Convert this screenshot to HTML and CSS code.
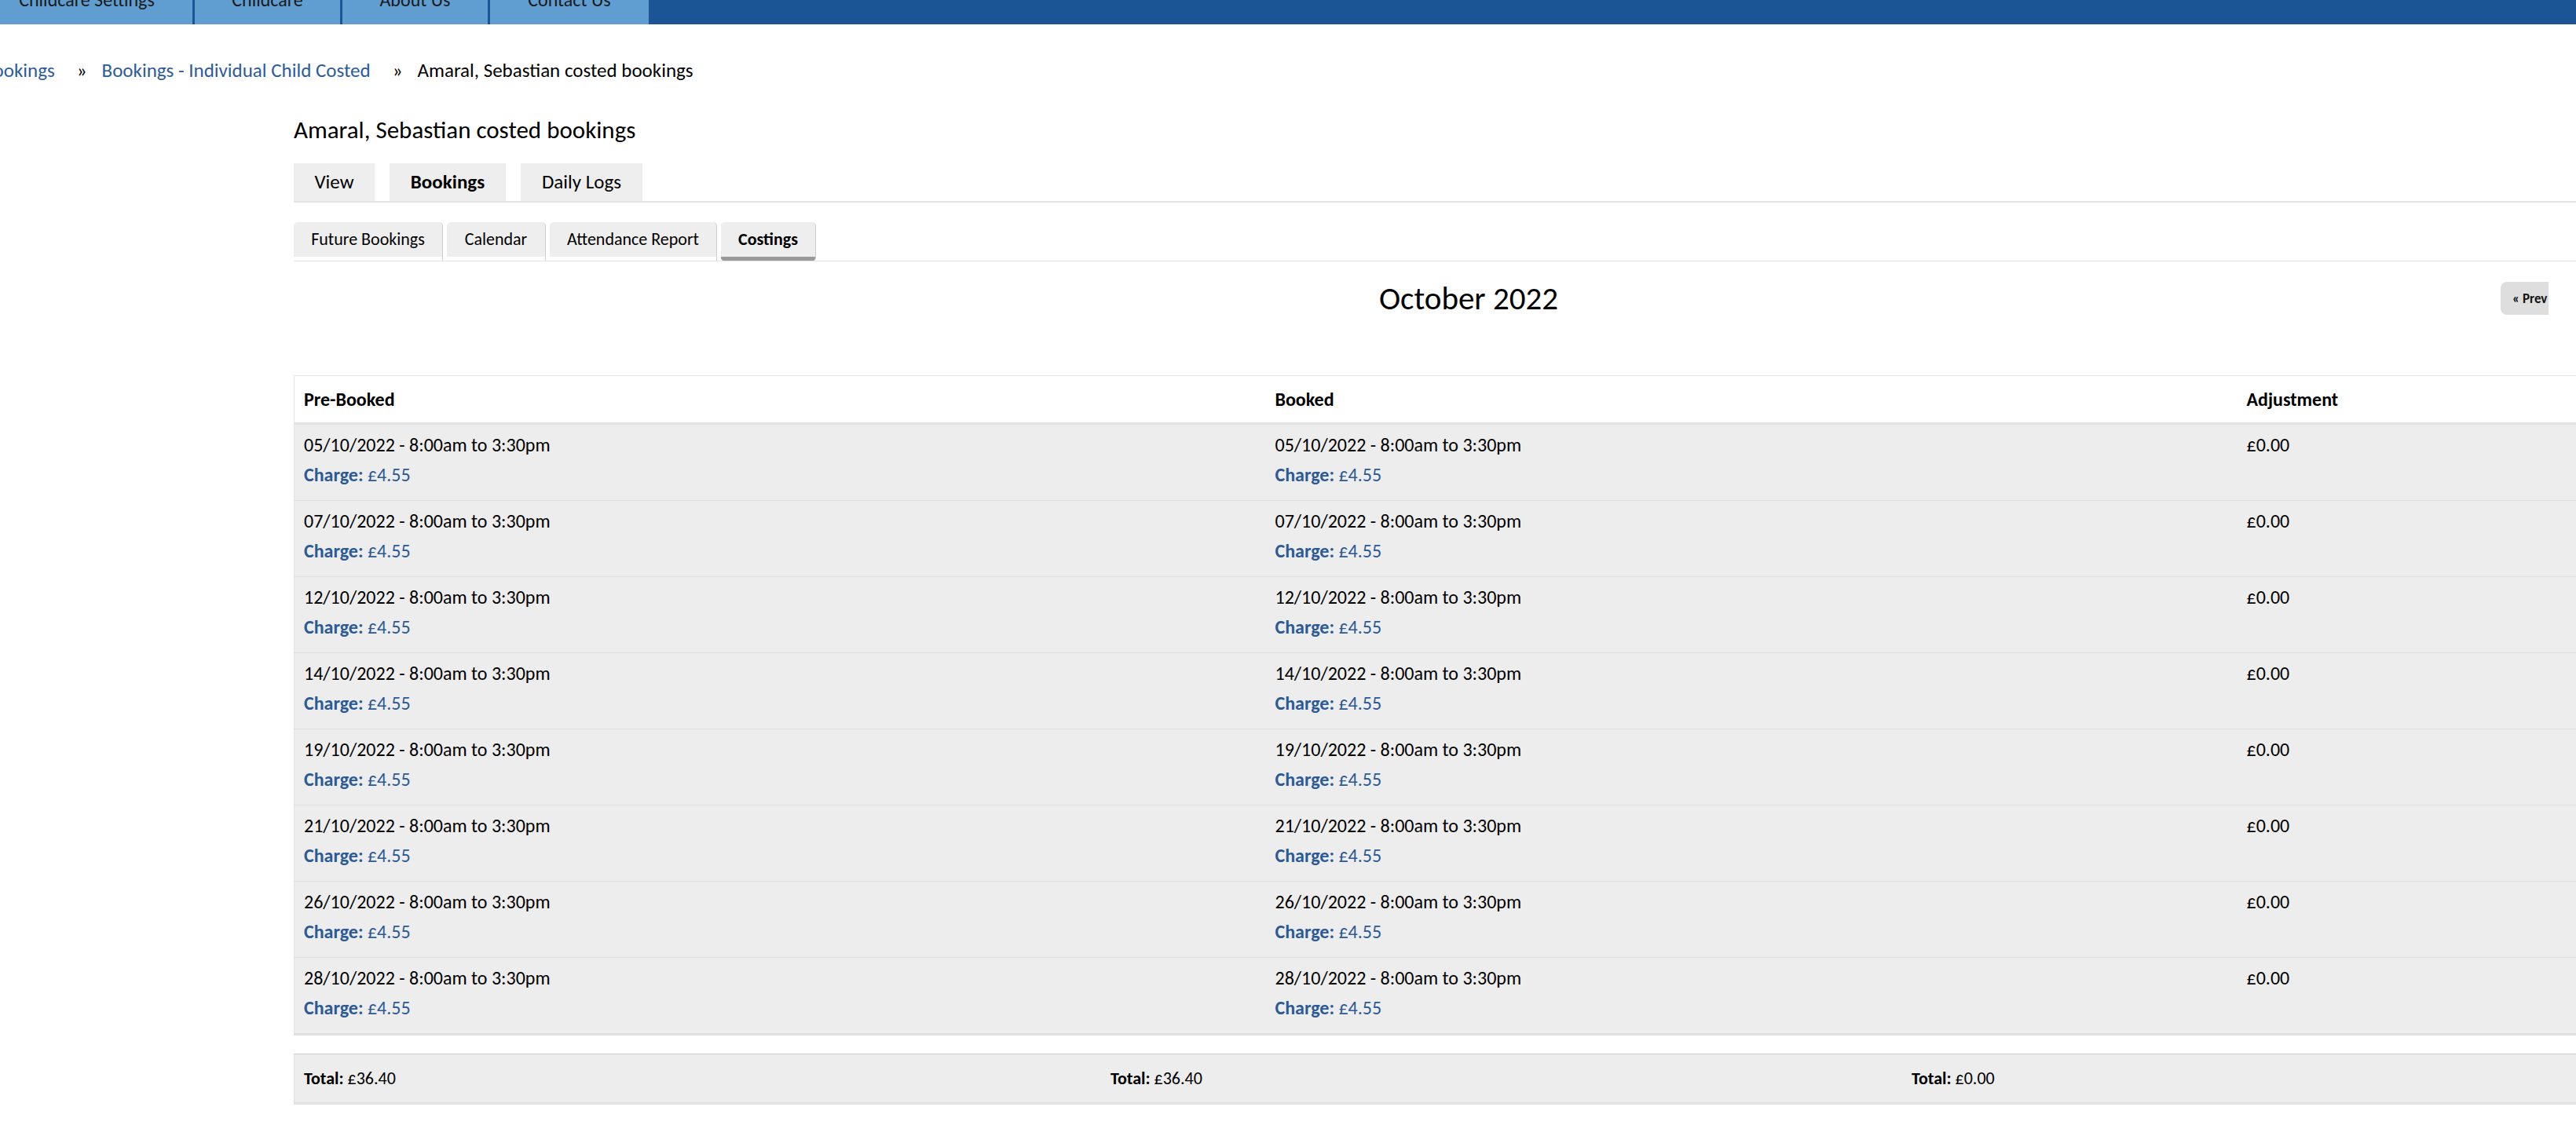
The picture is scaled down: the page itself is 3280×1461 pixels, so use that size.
FILE: index.html
```html
<!DOCTYPE html>
<html lang="en">
<head>
<meta charset="utf-8">
<title>Amaral, Sebastian costed bookings</title>
<link rel="stylesheet" href="styles.css">
</head>
<body>
<nav class="topnav">
  <a class="nav-item nav-first" href="#"><span>Childcare Settings</span></a>
  <a class="nav-item nav-2" href="#"><span>Childcare</span></a>
  <a class="nav-item nav-3" href="#"><span>About Us</span></a>
  <a class="nav-item nav-4" href="#"><span>Contact Us</span></a>
</nav>

<div class="breadcrumb">
  <a href="#">Bookings</a><span class="sep">»</span><a href="#">Bookings - Individual Child Costed</a><span class="sep">»</span><span class="current">Amaral, Sebastian costed bookings</span>
</div>

<main class="content">
  <h1 class="page-title">Amaral, Sebastian costed bookings</h1>

  <ul class="tabs">
    <li class="tab tab-view">View</li>
    <li class="tab tab-active">Bookings</li>
    <li class="tab tab-logs">Daily Logs</li>
  </ul>

  <ul class="subtabs">
    <li class="subtab st-future">Future Bookings</li>
    <li class="subtab st-cal">Calendar</li>
    <li class="subtab st-att">Attendance Report</li>
    <li class="subtab st-cost subtab-active">Costings</li>
  </ul>

  <div class="cal-head">
    <h2 class="cal-title">October 2022</h2>
    <button class="cal-btn">« Prev</button>
  </div>

  <table class="costs">
    <colgroup><col class="c"><col class="c"><col class="c"></colgroup>
    <thead>
      <tr><th>Pre-Booked</th><th>Booked</th><th>Adjustment</th></tr>
    </thead>
    <tbody>
      <tr><td><div class="l">05/10/2022 - 8:00am to 3:30pm</div><div class="l charge"><b>Charge:</b> £4.55</div></td><td><div class="l">05/10/2022 - 8:00am to 3:30pm</div><div class="l charge"><b>Charge:</b> £4.55</div></td><td><div class="l">£0.00</div></td></tr>
      <tr><td><div class="l">07/10/2022 - 8:00am to 3:30pm</div><div class="l charge"><b>Charge:</b> £4.55</div></td><td><div class="l">07/10/2022 - 8:00am to 3:30pm</div><div class="l charge"><b>Charge:</b> £4.55</div></td><td><div class="l">£0.00</div></td></tr>
      <tr><td><div class="l">12/10/2022 - 8:00am to 3:30pm</div><div class="l charge"><b>Charge:</b> £4.55</div></td><td><div class="l">12/10/2022 - 8:00am to 3:30pm</div><div class="l charge"><b>Charge:</b> £4.55</div></td><td><div class="l">£0.00</div></td></tr>
      <tr><td><div class="l">14/10/2022 - 8:00am to 3:30pm</div><div class="l charge"><b>Charge:</b> £4.55</div></td><td><div class="l">14/10/2022 - 8:00am to 3:30pm</div><div class="l charge"><b>Charge:</b> £4.55</div></td><td><div class="l">£0.00</div></td></tr>
      <tr><td><div class="l">19/10/2022 - 8:00am to 3:30pm</div><div class="l charge"><b>Charge:</b> £4.55</div></td><td><div class="l">19/10/2022 - 8:00am to 3:30pm</div><div class="l charge"><b>Charge:</b> £4.55</div></td><td><div class="l">£0.00</div></td></tr>
      <tr><td><div class="l">21/10/2022 - 8:00am to 3:30pm</div><div class="l charge"><b>Charge:</b> £4.55</div></td><td><div class="l">21/10/2022 - 8:00am to 3:30pm</div><div class="l charge"><b>Charge:</b> £4.55</div></td><td><div class="l">£0.00</div></td></tr>
      <tr><td><div class="l">26/10/2022 - 8:00am to 3:30pm</div><div class="l charge"><b>Charge:</b> £4.55</div></td><td><div class="l">26/10/2022 - 8:00am to 3:30pm</div><div class="l charge"><b>Charge:</b> £4.55</div></td><td><div class="l">£0.00</div></td></tr>
      <tr class="last"><td><div class="l">28/10/2022 - 8:00am to 3:30pm</div><div class="l charge"><b>Charge:</b> £4.55</div></td><td><div class="l">28/10/2022 - 8:00am to 3:30pm</div><div class="l charge"><b>Charge:</b> £4.55</div></td><td><div class="l">£0.00</div></td></tr>
    </tbody>
  </table>

  <div class="totals">
    <div class="tot"><b>Total:</b> £36.40</div>
    <div class="tot"><b>Total:</b> £36.40</div>
    <div class="tot"><b>Total:</b> £0.00</div>
  </div>
</main>
</body>
</html>
```
FILE: styles.css
```css
html, body {
  margin: 0;
  padding: 0;
  overflow: hidden;
  background: #ffffff;
}
body {
  font-family: "Carlito", "Calibri", "Lato", "Liberation Sans", sans-serif;
  color: #000;
  width: 3280px;
}
a { text-decoration: none; }

/* top navigation */
.topnav {
  display: flex;
  height: 31px;
  overflow: hidden;
  background: #1b5596;
}
.nav-item {
  flex: none;
  display: flex;
  justify-content: center;
  align-items: flex-end;
  padding-bottom: 19px;
  box-sizing: border-box;
  height: 31px;
  background: #609ed1;
  color: #1a1a1a;
  font-size: 24px;
  line-height: 24px;
  white-space: nowrap;
}
.nav-first { margin-left: -24px; width: 269px; }
.nav-2 { width: 185px; margin-left: 3px; }
.nav-3 { width: 185px; margin-left: 3px; }
.nav-4 { width: 202px; margin-left: 3px; }

/* breadcrumb */
.breadcrumb {
  margin: 44px 0 0 -22px;
  font-size: 25px;
  line-height: 30px;
  white-space: nowrap;
}
.breadcrumb a { color: #2c5b99; }
.breadcrumb .sep { margin: 0 19px 0 28px; color: #000; }
.breadcrumb .current { color: #000; }

/* main content */
.content {
  margin-left: 374px;
}
.page-title {
  margin: 42px 0 0;
  font-size: 31px;
  font-weight: normal;
  line-height: 36px;
}

.tabs {
  list-style: none;
  margin: 25px 0 0;
  padding: 0;
  display: flex;
  gap: 19px;
  border-bottom: 2px solid #e3e3e3;
}
.tab {
  height: 48px;
  line-height: 48px;
  padding: 0 26px;
  background: #eeeeee;
  font-size: 25px;
  text-align: center;
  white-space: nowrap;
}
.tab-view { width: 51px; }
.tab-active { font-weight: bold; width: 96px; }
.tab-logs { width: 103px; }

.subtabs {
  list-style: none;
  margin: 25px 0 0;
  padding: 0;
  display: flex;
  gap: 5px;
  border-bottom: 1px solid #e3e3e3;
}
.subtab {
  box-sizing: border-box;
  height: 49px;
  line-height: 44px;
  padding: 0;
  text-align: center;
  white-space: nowrap;
  font-size: 22px;
  background: linear-gradient(#eeeeee, #eeeeee) top / 100% 44px no-repeat;
  border-radius: 5px 5px 0 0;
  border-right: 1px solid #cfcfcf;
}
.st-future { width: 190px; }
.st-cal { width: 126px; }
.st-att { width: 213px; }
.st-cost { width: 121px; }
.subtab-active {
  font-weight: bold;
  background:
    linear-gradient(#eeeeee, #eeeeee) top / 100% 44px no-repeat,
    linear-gradient(#9a9a9a, #9a9a9a) bottom / 100% 5px no-repeat;
  border-radius: 5px 5px 4px 4px;
}

/* calendar header */
.cal-head {
  display: flex;
  align-items: center;
  width: 2871px;
  overflow: hidden;
  padding-top: 26px;
  margin-bottom: 77px;
}
.cal-title {
  flex: none;
  box-sizing: border-box;
  width: 2810px;
  padding-left: 182px;
  margin: 0;
  text-align: center;
  font-size: 41px;
  font-weight: normal;
  line-height: 42px;
}
.cal-btn {
  flex: none;
  height: 42px;
  width: 110px;
  padding: 0 0 0 15px;
  text-align: left;
  border: none;
  border-radius: 8px;
  background: #dedede;
  font-family: inherit;
  font-weight: bold;
  font-size: 17px;
  color: #111;
}

/* costs table */
.costs {
  border-collapse: collapse;
  table-layout: fixed;
  width: 3711px;
  border-left: 1px solid #e3e3e3;
  font-size: 24px;
}
.costs col.c { width: 1237px; }
.costs th {
  height: 61px;
  padding: 0 12px;
  text-align: left;
  font-weight: bold;
  background: #fff;
  border-top: 1px solid #e3e3e3;
  border-bottom: 3px solid #e3e3e3;
  box-sizing: border-box;
}
.costs td {
  vertical-align: top;
  background: #ededed;
  padding: 7px 12px 13px;
  border-bottom: 1px solid #dfdfdf;
  height: 76px;
}
.costs tr.last td { border-bottom: 3px solid #e0e0e0; }
.costs .l { line-height: 38px; white-space: nowrap; }
.costs .charge { color: #2b5a97; }

/* totals */
.totals {
  display: grid;
  grid-template-columns: 1027px 1020px 1020px 1fr;
  margin-top: 23px;
  width: 3711px;
  height: 61px;
  align-items: center;
  background: #ededed;
  border-top: 1px solid #cccccc;
  border-bottom: 3px solid #e3e3e3;
  border-left: 1px solid #dddddd;
  font-size: 22px;
}
.tot { padding-left: 12px; white-space: nowrap; }
```
